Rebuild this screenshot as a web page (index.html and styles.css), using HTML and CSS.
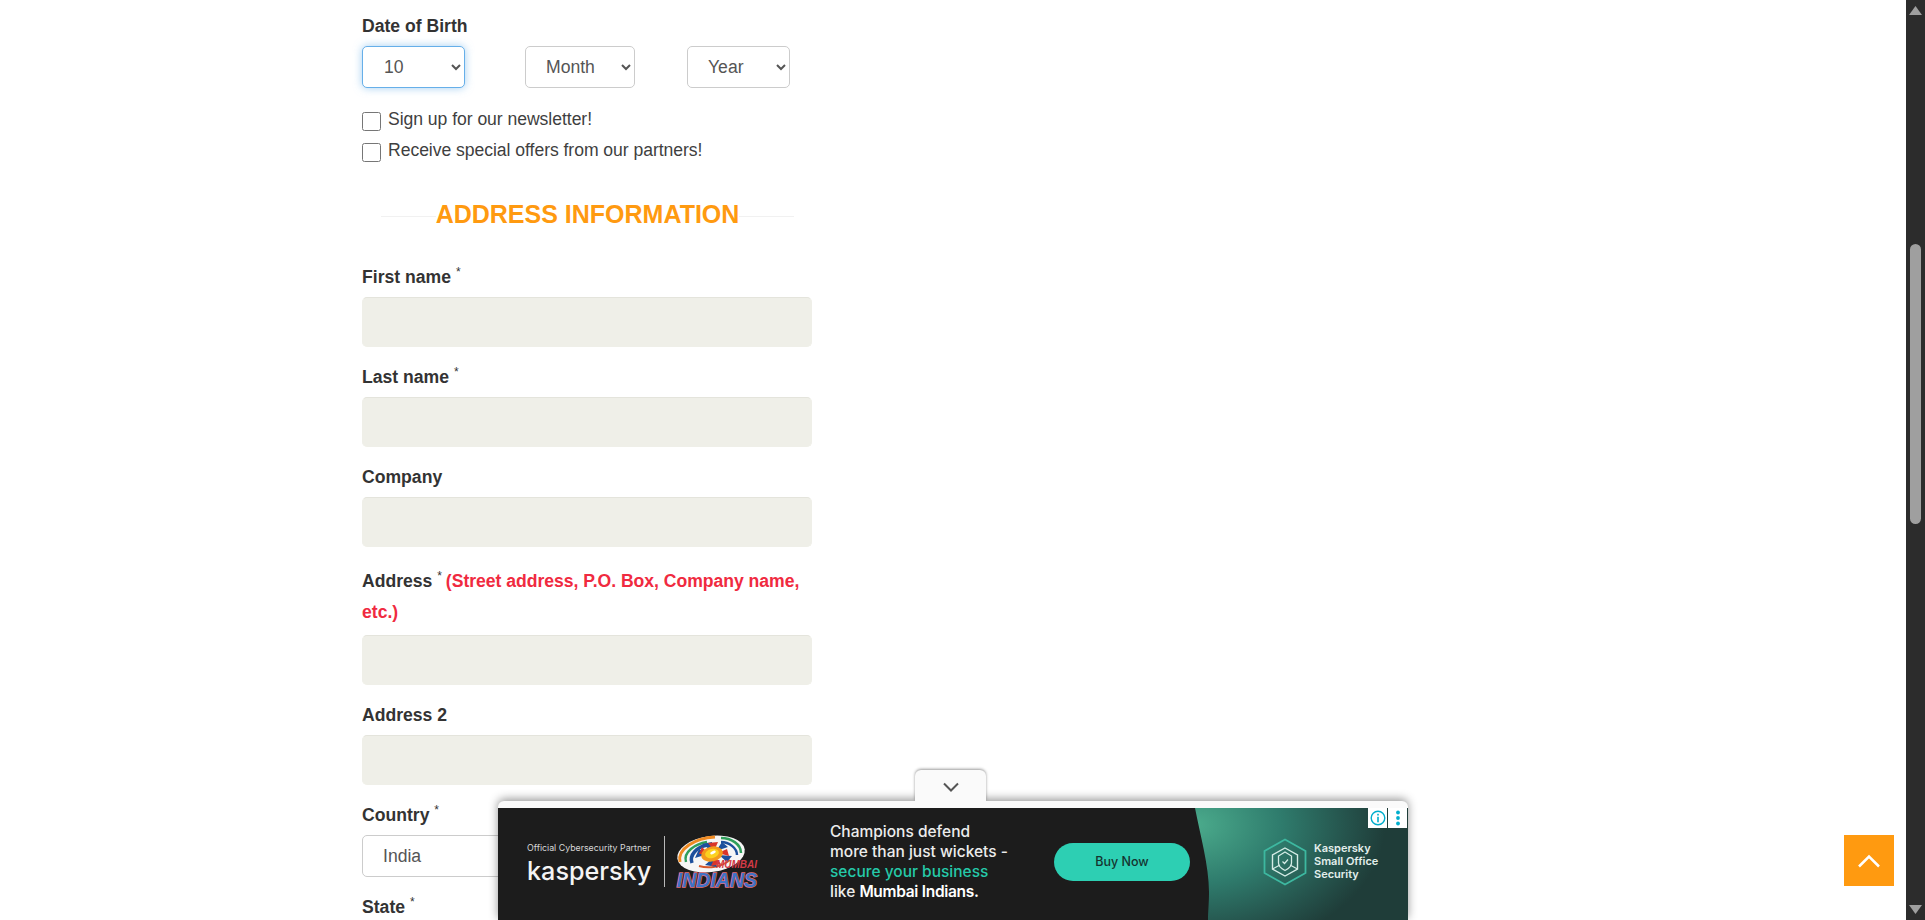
FILE: index.html
```html
<!DOCTYPE html>
<html lang="en">
<head>
  <meta charset="UTF-8">
  <meta name="viewport" content="width=device-width, initial-scale=1.0">
  <title>Register</title>
  <link rel="stylesheet" href="styles.css">
</head>
<body>

<form class="signup-form">
  <label class="field-label">Date of Birth</label>
  <div class="dob-row">
    <select class="form-select dob-day is-focus"><option>10</option></select>
    <select class="form-select dob-month"><option>Month</option></select>
    <select class="form-select dob-year"><option>Year</option></select>
  </div>

  <div class="check-list">
    <label class="check-row"><input type="checkbox"> Sign up for our newsletter!</label>
    <label class="check-row"><input type="checkbox"> Receive special offers from our partners!</label>
  </div>

  <h2 class="section-title">ADDRESS INFORMATION</h2>

  <div class="field">
    <label class="field-label">First name <sup>*</sup></label>
    <input class="form-input" type="text">
  </div>
  <div class="field">
    <label class="field-label">Last name <sup>*</sup></label>
    <input class="form-input" type="text">
  </div>
  <div class="field">
    <label class="field-label">Company</label>
    <input class="form-input" type="text">
  </div>
  <div class="field">
    <label class="field-label field-label-long">Address <sup>*</sup> <span class="field-note">(Street address, P.O. Box, Company name,</span><br><span class="field-note-end">etc.)</span></label>
    <input class="form-input" type="text">
  </div>
  <div class="field">
    <label class="field-label">Address 2</label>
    <input class="form-input" type="text">
  </div>
  <div class="field">
    <label class="field-label">Country <sup>*</sup></label>
    <select class="form-select country-select"><option>India</option></select>
  </div>
  <div class="field">
    <label class="field-label">State <sup>*</sup></label>
  </div>
</form>

<!-- sticky ad at the bottom -->
<div class="ad-bar">
  <button class="ad-toggle" type="button" aria-label="Collapse">
    <svg width="18" height="11" viewBox="0 0 18 11"><path d="M2 1.5 L9 8.5 L16 1.5" fill="none" stroke="#555" stroke-width="2"/></svg>
  </button>
  <div class="ad-creative">
    <div class="ad-partner">
      <div class="ad-partner-line">Official Cybersecurity Partner</div>
      <div class="ad-wordmark">kaspersky</div>
    </div>
    <div class="ad-divider"></div>
    <svg class="ad-team-logo" width="84" height="56" viewBox="0 0 84 56">
      <ellipse cx="36" cy="20" rx="34" ry="18" transform="rotate(-8 36 20)" fill="#f6f6f6"/>
      <path d="M5 28 C2 15 20 4 40 3" fill="none" stroke="#ee8a22" stroke-width="3"/>
      <path d="M11 28 C8 18 20 10 32 8" fill="none" stroke="#2f9e5b" stroke-width="2.500"/>
      <path d="M66 19 C66 10 56 4 46 4" fill="none" stroke="#2f9e5b" stroke-width="2.500"/>
      <path d="M62 21 C62 14 54 8 46 8" fill="none" stroke="#1d4f9c" stroke-width="2.500"/>
      <path d="M17 29 C14 21 22 13 32 11" fill="none" stroke="#1d4f9c" stroke-width="3.500"/>
      <path d="M24 32 C34 35 46 33 55 26" fill="none" stroke="#d8582a" stroke-width="2"/>
      <path d="M20 24 L33 20 L24 15 Z M27 10 L37 17 L37 8 Z M47 8 L41 17 L53 13 Z M57 22 L44 21 L52 28 Z M42 33 L38 24 L30 31 Z" fill="#1d4f9c"/>
      <path d="M24 20 L34 20 L27 13 Z M33 9 L39 17 L43 8 Z M52 15 L43 19 L54 22 Z M46 30 L40 23 L36 32 Z" fill="#d8352a"/>
      <ellipse cx="37" cy="20" rx="11" ry="7.500" transform="rotate(-12 37 20)" fill="#f39a1c"/>
      <ellipse cx="37" cy="19.500" rx="7" ry="4.500" transform="rotate(-12 37 19.500)" fill="#fbd11f"/>
      <ellipse cx="38" cy="18.500" rx="3" ry="1.500" transform="rotate(-25 38 18.500)" fill="#fff"/>
      <text class="logo-city" x="82" y="34" text-anchor="end">MUMBAI</text>
      <text class="logo-team" x="82" y="53" text-anchor="end">INDIANS</text>
    </svg>
    <div class="ad-copy">
      <div>Champions defend</div>
      <div>more than just wickets -</div>
      <div class="ad-copy-accent">secure your business</div>
      <div>like <b>Mumbai Indians.</b></div>
    </div>
    <div class="ad-button">Buy Now</div>
    <div class="ad-panel">
      <svg class="ad-hex" width="44" height="48" viewBox="0 0 44 48">
        <path d="M22 1.5 L42.5 13 V35 L22 46.5 L1.500 35 V13 Z" fill="none" stroke="#3db8a0" stroke-width="1.800"/>
        <path d="M22 10 L34.500 17 V31 L22 38 L9.500 31 V17 Z" fill="none" stroke="#d5ece6" stroke-width="1.400"/>
        <path d="M22 14 L28.500 18 V25 C28.500 29 25 31 22 32.500 C19 31 15.500 29 15.500 25 V18 Z" fill="none" stroke="#d5ece6" stroke-width="1.300"/>
        <path d="M19.500 23.500 L21.500 25.500 L25 21.500" fill="none" stroke="#d5ece6" stroke-width="1.200"/>
        <path d="M9.500 31 L17 27 M34.500 31 L27 27" stroke="#d5ece6" stroke-width="1.200"/>
      </svg>
      <div class="ad-product">Kaspersky<br>Small Office<br>Security</div>
    </div>
    <div class="ad-badges">
      <span class="ad-badge">
        <svg width="16" height="16" viewBox="0 0 16 16"><circle cx="8" cy="8" r="6.800" fill="none" stroke="#00aecd" stroke-width="1.400"/><rect x="7.200" y="6.800" width="1.600" height="5.500" fill="#00aecd"/><rect x="7.200" y="3.800" width="1.600" height="1.700" fill="#00aecd"/></svg>
      </span>
      <span class="ad-badge">
        <svg width="6" height="16" viewBox="0 0 6 16"><circle cx="3" cy="2.500" r="1.900" fill="#00aecd"/><circle cx="3" cy="8" r="1.900" fill="#00aecd"/><circle cx="3" cy="13.500" r="1.900" fill="#00aecd"/></svg>
      </span>
    </div>
  </div>
</div>

<a class="back-to-top" href="#" aria-label="Back to top">
  <svg width="24" height="14" viewBox="0 0 24 14"><path d="M2 12.500 L12 2.500 L22 12.500" fill="none" stroke="#fff" stroke-width="2.500"/></svg>
</a>

<div class="fake-scrollbar">
  <svg class="scroll-arrow scroll-arrow-up" width="13" height="9" viewBox="0 0 13 9"><path d="M6.500 0 L13 9 H0 Z" fill="#9f9f9f"/></svg>
  <div class="scroll-thumb"></div>
  <svg class="scroll-arrow scroll-arrow-down" width="13" height="9" viewBox="0 0 13 9"><path d="M0 0 H13 L6.500 9 Z" fill="#9f9f9f"/></svg>
</div>

</body>
</html>
```

FILE: styles.css
```css
html, body {
  height: 100%;
}

body {
  font-family: 'Liberation Sans', Arial, sans-serif;
  font-size: 17.6px;
  line-height: 31px;
  color: #333;
  margin: 0;
  overflow: hidden;
  background: #fff;
}

.signup-form {
  width: 450px;
  margin-left: 362px;
  padding-top: 11px;
}

.field-label {
  display: block;
  font-weight: bold;
  margin-bottom: 4px;
}

.field-label sup {
  font-size: 12px;
  font-weight: normal;
  line-height: 0;
}

.field-label-long {
  padding-top: 4px;
  margin-bottom: 7px;
}

.field-note {
  margin-left: -1px;
  letter-spacing: -0.03px;
  color: #f02a40;
}

.field-note-end {
  color: #f02a40;
}

.field {
  margin-bottom: 15px;
}

.form-input {
  display: block;
  box-sizing: border-box;
  width: 100%;
  height: 50px;
  background-color: #efefe8;
  border: 1px solid #efefe8;
  border-top-color: #e4e4dc;
  border-radius: 5px;
}

.form-select {
  box-sizing: border-box;
  height: 42px;
  padding-left: 16px;
  background-color: #fff;
  border: 1px solid #ccc;
  border-radius: 5px;
  font-family: inherit;
  font-size: 17.6px;
  color: #555;
}

.is-focus {
  border-color: #66afe9;
  box-shadow: 0 0 8px rgba(102, 175, 233, 0.6);
  outline: none;
}

.dob-row {
  display: flex;
}

.dob-day {
  width: 103px;
  margin-right: 60px;
  padding-left: 17px;
}

.dob-month {
  width: 110px;
  margin-right: 52px;
}

.dob-year {
  width: 103px;
}

.country-select {
  display: block;
  width: 100%;
}

.check-list {
  margin-top: 14px;
}

.check-row {
  display: flex;
  gap: 7px;
  padding-top: 2px;
  margin-bottom: -2px;
  letter-spacing: -0.05px;
  color: #3f3f3f;
}

.check-row input {
  flex: none;
  width: 19px;
  height: 19px;
  margin: 8px 0 0 0;
}

.section-title {
  display: flex;
  align-items: center;
  margin: 24px 18px 23px 19px;
  padding-top: 1px;
  font-size: 25px;
  line-height: 50px;
  font-weight: bold;
  color: #ff9a10;
}

.section-title::before, .section-title::after {
  content: "";
  flex: 1;
  height: 1px;
  margin-top: 5px;
  background-color: #f1f1f1;
}

/* ad bar */
.ad-bar {
  position: fixed;
  left: 498px;
  bottom: 0;
  width: 910px;
  padding-top: 7px;
  background-color: #fafafa;
  border-radius: 6px 6px 0 0;
  box-shadow: 0 -2px 10px rgba(0, 0, 0, 0.42);
}

.ad-toggle {
  position: absolute;
  left: 417px;
  top: -31px;
  width: 71px;
  height: 31px;
  padding: 5px 0 0 0;
  border: none;
  background-color: #fafafa;
  border-radius: 6px 6px 0 0;
  box-shadow: 0 -1px 3px rgba(0, 0, 0, 0.4);
  clip-path: inset(-6px -6px 0 -6px);
}

.ad-creative {
  position: relative;
  display: flex;
  align-items: flex-start;
  height: 112px;
  padding-left: 29px;
  box-sizing: border-box;
  background-color: #1c1c1c;
  font-family: Inter, 'Liberation Sans', sans-serif;
  color: #ececec;
}

.ad-partner {
  flex: none;
  width: 123px;
  margin-top: 34px;
}

.ad-partner-line {
  font-size: 8.8px;
  line-height: 12px;
  color: #d8d8d8;
  white-space: nowrap;
}

.ad-wordmark {
  font-size: 25.2px;
  font-weight: 500;
  line-height: 30px;
  margin-top: 2px;
  color: #f4f4f4;
}

.ad-divider {
  flex: none;
  width: 1px;
  height: 51px;
  margin: 28px 10px 0 14px;
  background-color: #b9b9b9;
}

.ad-team-logo {
  flex: none;
  margin-top: 26px;
  overflow: visible;
}

.logo-city {
  font-family: 'Liberation Sans', sans-serif;
  font-size: 10px;
  font-weight: bold;
  font-style: italic;
  fill: #d33a46;
}

.logo-team {
  font-family: 'Liberation Sans', sans-serif;
  font-size: 19.5px;
  font-weight: bold;
  font-style: italic;
  fill: #3f72c6;
  stroke: #e8707a;
  stroke-width: 1.4px;
  paint-order: stroke;
}

.ad-copy {
  flex: none;
  width: 224px;
  margin: 14px 0 0 71px;
  font-size: 15.5px;
  font-weight: 500;
  line-height: 20px;
  white-space: nowrap;
}

.ad-copy b {
  font-weight: 600;
  letter-spacing: -0.3px;
  color: #fff;
}

.ad-copy-accent {
  color: #25c9a9;
}

.ad-button {
  flex: none;
  width: 136px;
  height: 38px;
  margin-top: 35px;
  border-radius: 19px;
  background-color: #2dcfb3;
  color: #15332f;
  font-size: 12.5px;
  font-weight: 500;
  line-height: 38px;
  text-align: center;
}

.ad-panel {
  flex: none;
  display: flex;
  align-items: flex-start;
  width: 213px;
  height: 112px;
  margin-left: 5px;
  background: radial-gradient(ellipse 190px 130px at 0 15%, #4bab8c 0, #2f7c6d 45%, #25534c 80%, #1f3d39 100%);
  clip-path: path('M0 0 C5 26 14 58 14 84 C14 96 13 104 13 112 L213 112 L213 0 Z');
}

.ad-hex {
  flex: none;
  margin: 30px 7px 0 68px;
}

.ad-product {
  margin-top: 34px;
  font-size: 11px;
  line-height: 13px;
  font-weight: 600;
  color: #e3efec;
  white-space: nowrap;
}

.ad-badges {
  position: absolute;
  top: 0;
  right: 1px;
  display: flex;
  gap: 1px;
}

.ad-badge {
  display: flex;
  align-items: center;
  justify-content: center;
  width: 19px;
  height: 20px;
  background-color: #fff;
}

.back-to-top {
  position: fixed;
  right: 31px;
  bottom: 34px;
  display: flex;
  align-items: center;
  justify-content: center;
  width: 50px;
  height: 51px;
  background-color: #ff9a10;
}

/* dark browser scrollbar */
.fake-scrollbar {
  position: fixed;
  top: 0;
  right: 0;
  bottom: 0;
  width: 19px;
  background-color: #2c2c2c;
}

.scroll-arrow {
  position: absolute;
  left: 3px;
}

.scroll-arrow-up {
  top: 6px;
}

.scroll-arrow-down {
  bottom: 6px;
}

.scroll-thumb {
  position: absolute;
  top: 244px;
  left: 4px;
  width: 11px;
  height: 280px;
  border-radius: 6px;
  background-color: #9f9f9f;
}
```
